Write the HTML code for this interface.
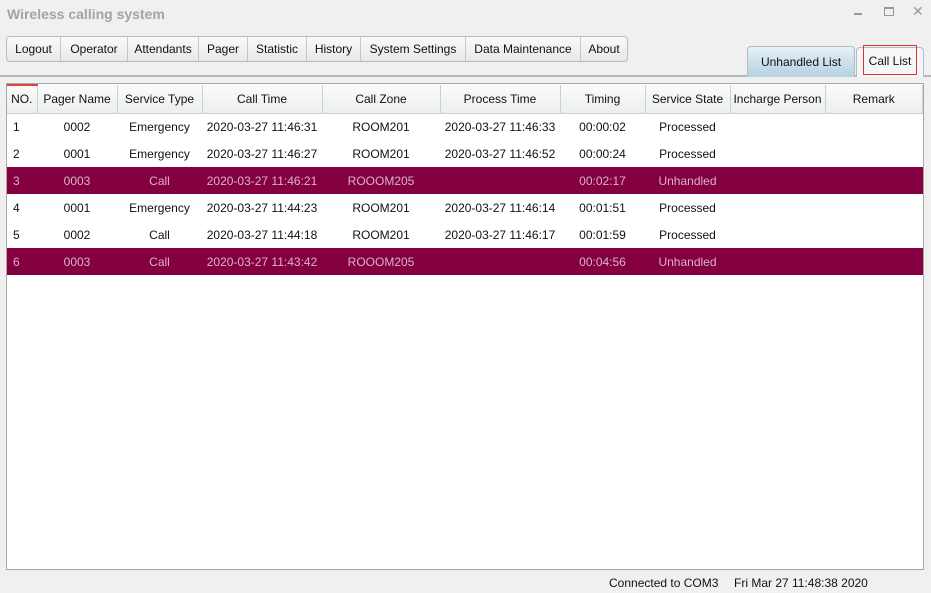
<!DOCTYPE html>
<html><head><meta charset="utf-8"><style>
*{margin:0;padding:0;box-sizing:border-box}
body{width:931px;height:593px;background:#f0f0f0;font-family:"Liberation Sans",Arial,sans-serif;font-size:12px;color:#111;position:relative;overflow:hidden}
.title{position:absolute;left:7px;top:6px;font-size:14px;font-weight:bold;color:#a0a4a8}
.win{position:absolute;top:4px;color:#999;font-size:13px}
.tb{position:absolute;left:6px;top:36px;height:26px;display:flex;border:1px solid #b8bcc0;border-radius:4px;background:linear-gradient(#fafafa,#e6e8ea)}
.tb div{line-height:24px;border-right:1px solid #c4c8cc;font-size:12px;text-align:center}
.tb div:last-child{border-right:none}
.tab{position:absolute;top:46px;height:31px;border:1px solid #b0bcc6;border-bottom:none;border-radius:4px 4px 0 0;text-align:center;line-height:30px;font-size:12px}
.line{position:absolute;left:0;top:75px;width:931px;height:2px;background:#aebcc8}
.tbl{position:absolute;left:6px;top:83px;width:918px;height:487px;background:#fff;border:1px solid #a8a8a8}
table{border-collapse:collapse;table-layout:fixed;width:916px}
th{height:28px;font-weight:normal;background:linear-gradient(#fbfbfb,#eceeef);border-right:1px solid #c8d0d8;border-bottom:1px solid #c8d0d8;font-size:12px;text-align:center;white-space:nowrap;overflow:hidden}
td{height:27px;text-align:center;font-size:12px;white-space:nowrap}
td:first-child{text-align:left;padding-left:6px}
tr.h td{background:#850040;color:#d9b3c4}
.status{position:absolute;top:576px;font-size:12px}
</style></head><body>
<div class="title">Wireless calling system</div>
<div style="position:absolute;left:854px;top:13px;width:8px;height:1.5px;background:#999"></div>
<div style="position:absolute;left:884px;top:7px;width:10px;height:9px;border:1.5px solid #999;border-top-width:2.5px"></div>
<div class="win" style="left:912px;top:3px;font-size:14px">✕</div>
<div class="tb"><div style="width:54px">Logout</div><div style="width:67px">Operator</div><div style="width:71px">Attendants</div><div style="width:49px">Pager</div><div style="width:59px">Statistic</div><div style="width:54px">History</div><div style="width:105px">System Settings</div><div style="width:115px">Data Maintenance</div><div style="width:46px">About</div></div>
<div class="line"></div>
<div class="tab" style="left:747px;width:108px;background:linear-gradient(#e6f0f6,#b6d2e0)">Unhandled List</div>
<div class="tab" style="left:856px;width:68px;background:#f4f6f8;top:47px;height:30px"></div>
<div style="position:absolute;left:863px;top:45px;width:54px;height:30px;border:1px solid #e03030;text-align:center;line-height:30px">Call List</div>
<div class="tbl"><table>
<colgroup><col style="width:30px"><col style="width:80px"><col style="width:85px"><col style="width:120px"><col style="width:118px"><col style="width:120px"><col style="width:85px"><col style="width:85px"><col style="width:95px"><col></colgroup>
<tr><th style="border-top:2px solid #e04040">NO.</th><th>Pager Name</th><th>Service Type</th><th>Call Time</th><th>Call Zone</th><th>Process Time</th><th>Timing</th><th>Service State</th><th>Incharge Person</th><th>Remark</th></tr>
<tr><td>1</td><td>0002</td><td>Emergency</td><td>2020-03-27 11:46:31</td><td>ROOM201</td><td>2020-03-27 11:46:33</td><td>00:00:02</td><td>Processed</td><td></td><td></td></tr>
<tr><td>2</td><td>0001</td><td>Emergency</td><td>2020-03-27 11:46:27</td><td>ROOM201</td><td>2020-03-27 11:46:52</td><td>00:00:24</td><td>Processed</td><td></td><td></td></tr>
<tr class="h"><td>3</td><td>0003</td><td>Call</td><td>2020-03-27 11:46:21</td><td>ROOOM205</td><td></td><td>00:02:17</td><td>Unhandled</td><td></td><td></td></tr>
<tr><td>4</td><td>0001</td><td>Emergency</td><td>2020-03-27 11:44:23</td><td>ROOM201</td><td>2020-03-27 11:46:14</td><td>00:01:51</td><td>Processed</td><td></td><td></td></tr>
<tr><td>5</td><td>0002</td><td>Call</td><td>2020-03-27 11:44:18</td><td>ROOM201</td><td>2020-03-27 11:46:17</td><td>00:01:59</td><td>Processed</td><td></td><td></td></tr>
<tr class="h"><td>6</td><td>0003</td><td>Call</td><td>2020-03-27 11:43:42</td><td>ROOOM205</td><td></td><td>00:04:56</td><td>Unhandled</td><td></td><td></td></tr>
</table></div>
<div class="status" style="left:609px">Connected to COM3</div>
<div class="status" style="left:734px">Fri Mar 27 11:48:38 2020</div>
</body></html>
